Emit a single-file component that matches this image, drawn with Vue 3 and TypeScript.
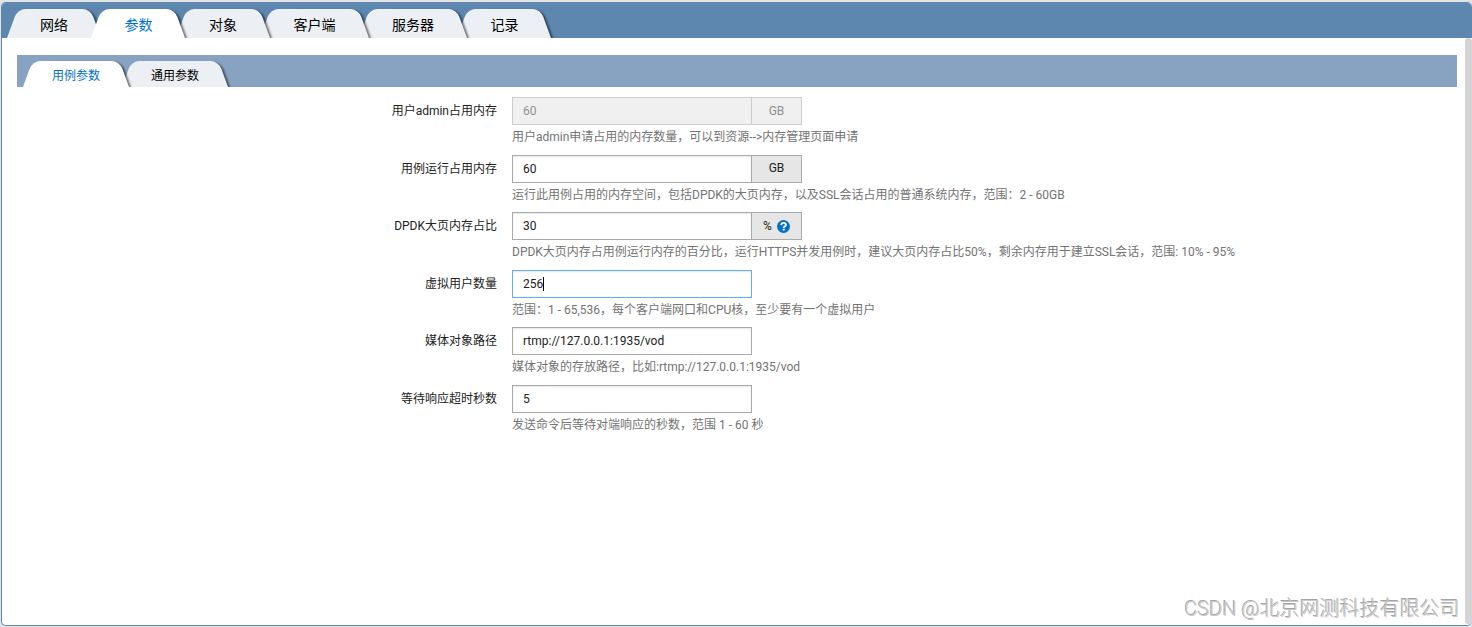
<script setup lang="ts">
interface Field {
  id: string
  label: string
  value: string
  hint: string
  unit?: string
  help?: boolean
  disabled?: boolean
  active?: boolean
}

const mainTabs: string[] = ['网络', '参数', '对象', '客户端', '服务器', '记录']
const subTabs: string[] = ['用例参数', '通用参数']
const currentMain = 1
const currentSub = 0

const fields: Field[] = [
  {
    id: 'admin-memory',
    label: '用户admin占用内存',
    value: '60',
    unit: 'GB',
    disabled: true,
    hint: '用户admin申请占用的内存数量，可以到资源-->内存管理页面申请',
  },
  {
    id: 'case-memory',
    label: '用例运行占用内存',
    value: '60',
    unit: 'GB',
    hint: '运行此用例占用的内存空间，包括DPDK的大页内存，以及SSL会话占用的普通系统内存，范围：2 - 60GB',
  },
  {
    id: 'hugepage',
    label: 'DPDK大页内存占比',
    value: '30',
    unit: '%',
    help: true,
    hint: 'DPDK大页内存占用例运行内存的百分比，运行HTTPS并发用例时，建议大页内存占比50%，剩余内存用于建立SSL会话，范围: 10% - 95%',
  },
  {
    id: 'virtual-users',
    label: '虚拟用户数量',
    value: '256',
    active: true,
    hint: '范围：1 - 65,536，每个客户端网口和CPU核，至少要有一个虚拟用户',
  },
  {
    id: 'media-path',
    label: '媒体对象路径',
    value: 'rtmp://127.0.0.1:1935/vod',
    hint: '媒体对象的存放路径，比如:rtmp://127.0.0.1:1935/vod',
  },
  {
    id: 'timeout',
    label: '等待响应超时秒数',
    value: '5',
    hint: '发送命令后等待对端响应的秒数，范围 1 - 60 秒',
  },
]

// Earlier tabs overlap later ones; the current tab lies over both neighbours.
function layer(index: number, current: number, count: number): number {
  return index === current ? count + 1 : count - index
}
</script>

<template>
  <div class="page">
    <div class="window">
      <nav class="tabs main-tabs">
        <template v-for="(tab, i) in mainTabs" :key="tab">
          <button
            type="button"
            class="tab"
            :class="{ current: i === currentMain }"
            :style="{ zIndex: layer(i, currentMain, mainTabs.length) }"
          ><span class="tab-text">{{ tab }}</span></button>{{ ' ' }}
        </template>
      </nav>

      <div class="body">
        <main class="content">
          <nav class="tabs sub-tabs">
            <template v-for="(tab, i) in subTabs" :key="tab">
              <button
                type="button"
                class="tab"
                :class="{ current: i === currentSub }"
                :style="{ zIndex: layer(i, currentSub, subTabs.length) }"
              ><span class="tab-text">{{ tab }}</span></button>{{ ' ' }}
            </template>
          </nav>

          <form class="form" @submit.prevent>
            <div v-for="f in fields" :key="f.id" class="row">
              <label class="label" :for="f.id">{{ f.label }}</label>
              <div class="control">
                <div class="group" :class="{ disabled: f.disabled, active: f.active }">
                  <input :id="f.id" class="input" type="text" :value="f.value" :disabled="f.disabled" />
                  <span v-if="f.active" class="caret"></span>
                  <span v-if="f.unit" class="unit">
                    {{ f.unit }}
                    <svg v-if="f.help" class="help" viewBox="0 0 12 12" aria-hidden="true">
                      <circle cx="6" cy="6" r="6" fill="#0071c5" />
                      <path
                        d="M3.9 4.7C4 3.3 4.9 2.7 6.1 2.7C7.4 2.7 8.2 3.4 8.2 4.5C8.2 5.9 6.2 5.8 6.2 7.3"
                        fill="none"
                        stroke="#fff"
                        stroke-width="1.7"
                      />
                      <rect x="5.3" y="8" width="1.8" height="1.7" fill="#fff" />
                    </svg>
                  </span>
                </div>
                <p class="hint">{{ f.hint }}</p>
              </div>
            </div>
          </form>
        </main>
        <div class="scrollbar"></div>
      </div>
    </div>
    <div class="watermark">CSDN @北京网测科技有限公司</div>
  </div>
</template>

<style>
body {
  margin: 0;
}
</style>

<style scoped>
.page {
  position: relative;
  box-sizing: border-box;
  display: flex;
  min-height: 100vh;
  padding: 2px 0 1px 1px;
  background: #e4e4e4;
  color: #222;
  font-family: Roboto, "Noto Sans CJK SC", sans-serif;
  font-size: 12px;
  line-height: 1.3;
}

.window {
  flex: 1;
  display: flex;
  flex-direction: column;
  border: 1px solid #5d87af;
  border-right: 0;
  border-radius: 5px;
  background: #fff;
  overflow: hidden;
}

.tabs {
  display: block;
  overflow: hidden;
  white-space: nowrap;
}

.main-tabs {
  height: 29px;
  padding: 6px 0 0 5px;
  background: #5d87af;
  font-size: 14px;
}

.sub-tabs {
  height: 26px;
  padding: 6px 0 0 6px;
  background: #87a3c1;
  font-size: 12px;
}

.tab {
  position: relative;
  isolation: isolate;
  height: 29px;
  margin: 0 -13px 0 0;
  padding: 4px 33px 0;
  border: 0;
  background: none;
  color: #000;
  font: inherit;
  vertical-align: top;
  cursor: pointer;
}

.sub-tabs .tab {
  height: 26px;
  margin-right: -10px;
  padding: 5px 29px 0;
}

.tab::before,
.tab::after {
  content: "";
  position: absolute;
  top: 0;
  bottom: 0;
  width: 60%;
  background: #eceff4;
}

.tab::before {
  left: 0;
  border-top-left-radius: 8px;
  transform: skewX(-20deg);
  transform-origin: left bottom;
}

.tab::after {
  right: 0;
  border-top-right-radius: 8px;
  box-shadow: 2px 1px 2px rgba(0, 0, 0, 0.5);
  transform: skewX(20deg);
  transform-origin: right bottom;
}

.tab-text {
  position: relative;
  z-index: 1;
}

.tab.current {
  color: #0071c5;
}

.tab.current::before,
.tab.current::after {
  background: #fff;
}

.body {
  flex: 1;
  display: flex;
}

.content {
  flex: 1;
  min-width: 0;
  padding: 17px 8px 0 15px;
}

.scrollbar {
  width: 7px;
  margin-bottom: 1px;
  border-radius: 4px;
  background: #d4d4d4;
}

.form {
  padding-top: 10px;
}

.row {
  display: grid;
  grid-template-columns: 1fr 2fr;
  margin-bottom: 9px;
}

.label {
  line-height: 28px;
  text-align: right;
}

.control {
  min-width: 0;
  padding-left: 15px;
}

.group {
  position: relative;
  display: flex;
  height: 28px;
}

.input {
  box-sizing: border-box;
  width: 240px;
  height: 28px;
  padding: 0 10px;
  border: 1px solid #aaa;
  border-radius: 0;
  outline: 0;
  background: #fff;
  box-shadow: inset 0 1px 2px rgba(0, 0, 0, 0.1);
  color: #222;
  font: inherit;
}

.unit {
  box-sizing: border-box;
  display: flex;
  align-items: center;
  justify-content: center;
  gap: 5px;
  width: 51px;
  margin-left: -1px;
  padding-top: 1px;
  border: 1px solid #aaa;
  background: #e6e6e6;
}

.disabled .input,
.disabled .unit {
  border-color: #ccc;
  background: #f0f0f0;
  color: #909090;
}

.disabled .input {
  box-shadow: none;
}

.active .input {
  border-color: #66afe9;
}

.caret {
  position: absolute;
  top: 7px;
  left: 31px;
  width: 1px;
  height: 14px;
  background: #000;
}

.help {
  width: 13px;
  height: 13px;
}

.hint {
  margin: 5px 0 0;
  color: #737373;
}

.watermark {
  position: absolute;
  right: 12px;
  bottom: 5px;
  color: #c8c8c8;
  font-size: 20px;
  font-weight: 300;
  text-shadow: -1px -1px 0 #a4a4a4;
  white-space: nowrap;
}
</style>
